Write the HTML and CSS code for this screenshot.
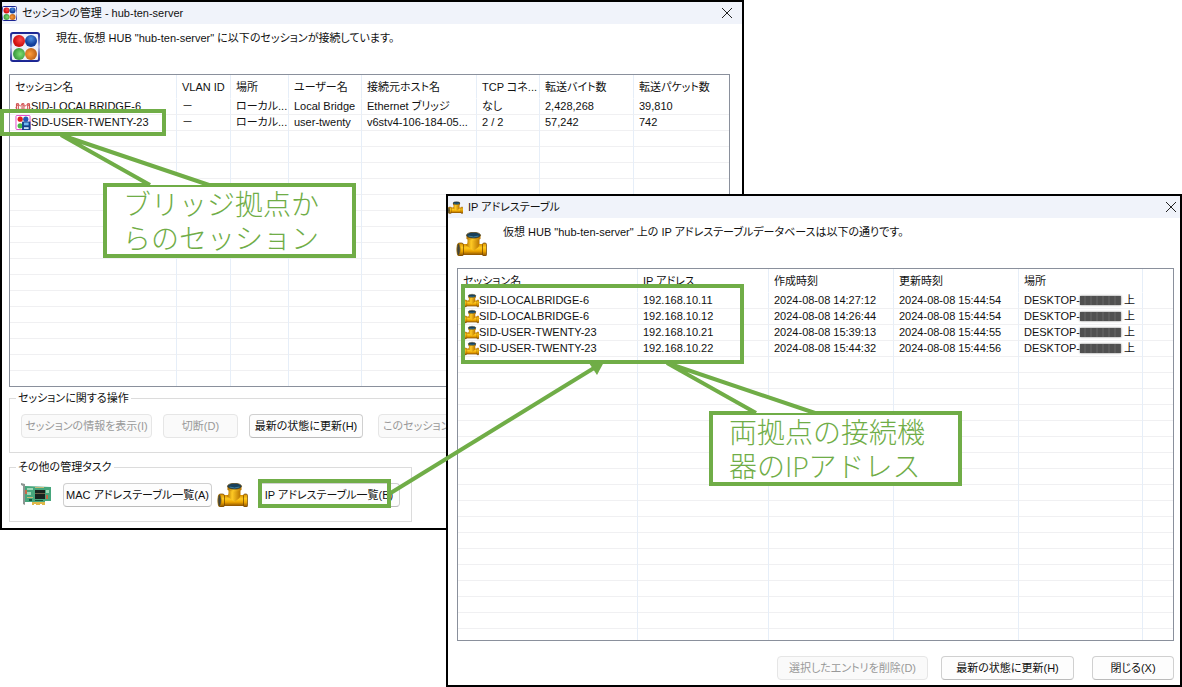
FILE: index.html
```html
<!DOCTYPE html>
<html lang="ja">
  <head>
    <meta charset="UTF-8" />
    <meta name="viewport" content="width=device-width, initial-scale=1.0" />
    <title>セッションの管理 - hub-ten-server</title>
    <link rel="stylesheet" href="styles.css">
  </head>
  <body>
    <!-- Shared icons -->
    <svg class="sprite" aria-hidden="true">
      <defs>
        <linearGradient id="brass" x1="0" y1="0" x2="0" y2="1">
          <stop offset="0" stop-color="#d99000" />
          <stop offset="0.35" stop-color="#ffcb20" />
          <stop offset="0.65" stop-color="#eda400" />
          <stop offset="1" stop-color="#8a5000" />
        </linearGradient>
        <linearGradient id="brass-side" x1="0" y1="0" x2="1" y2="0">
          <stop offset="0" stop-color="#a86800" />
          <stop offset="0.4" stop-color="#ffca24" />
          <stop offset="1" stop-color="#b87400" />
        </linearGradient>
        <linearGradient id="hub-frame" x1="0" y1="0" x2="0" y2="1">
          <stop offset="0" stop-color="#1a2492" />
          <stop offset="0.5" stop-color="#b9c0e6" />
          <stop offset="1" stop-color="#1a2492" />
        </linearGradient>
        <radialGradient id="ball-red" cx="0.6" cy="0.4"><stop offset="0" stop-color="#ff4a4a" /><stop offset="1" stop-color="#d01010" /></radialGradient>
        <radialGradient id="ball-blue" cx="0.5" cy="0.3"><stop offset="0" stop-color="#4f8fe0" /><stop offset="1" stop-color="#123f9c" /></radialGradient>
        <radialGradient id="ball-green" cx="0.6" cy="0.5"><stop offset="0" stop-color="#7fdd70" /><stop offset="1" stop-color="#3f9f43" /></radialGradient>
        <radialGradient id="ball-orange" cx="0.4" cy="0.5"><stop offset="0" stop-color="#ff9d3c" /><stop offset="1" stop-color="#c66a1c" /></radialGradient>
      </defs>
      <symbol id="icon-hub" viewBox="0 0 30 30">
        <rect x="1" y="1" width="28" height="28" rx="2" fill="#eef0fa" stroke="url(#hub-frame)" stroke-width="2" />
        <circle cx="9" cy="9" r="6" fill="url(#ball-red)" />
        <circle cx="21" cy="9" r="6" fill="url(#ball-blue)" />
        <circle cx="9" cy="22" r="6" fill="url(#ball-green)" />
        <circle cx="21" cy="22" r="6" fill="url(#ball-orange)" />
      </symbol>
      <symbol id="icon-pipe" viewBox="0 0 30 24">
        <rect x="3" y="12" width="24" height="11" fill="url(#brass)" />
        <path d="M11 5h12v7l-1 3-5 4-5-4-3-2c2-1 2-2 2-4z" fill="url(#brass-side)" />
        <path d="M10 3h14v4q-7 3-14 0z" fill="url(#brass-side)" />
        <ellipse cx="17" cy="3.200" rx="7" ry="2.900" fill="#17405c" stroke="#5c4718" stroke-width="0.8" />
        <path d="M12 4q5 2 10 0" fill="none" stroke="#3f7f9c" />
        <rect x="26" y="11" width="4" height="13" rx="1.500" fill="url(#brass)" stroke="#6e4400" stroke-width="0.7" />
        <rect x="1" y="11" width="6" height="13" rx="2" fill="url(#brass)" stroke="#6e4400" stroke-width="0.7" />
        <ellipse cx="2" cy="17.500" rx="1.700" ry="6" fill="#3f4440" stroke="#b87c00" stroke-width="0.7" />
      </symbol>
      <symbol id="icon-nic" viewBox="0 0 30 26">
        <path d="M0 1l4 1v21l-2-1V4L0 3z" fill="#8c9692" />
        <path d="M4 4l26 1v14h-6v3H11v-2H4z" fill="#46a67c" />
        <path d="M11 20h13v3h-3v-1h-2v1h-4v-1h-2v1h-2z" fill="#e0b84a" />
        <rect x="14" y="8" width="10" height="9" fill="#17241f" />
        <path d="M14 11h10v1H14z" fill="#6e6248" />
        <path d="M6 6h6v2H6zM6 10h4v3H6zM25 8h3v3h-3z" fill="#9fd8b8" />
        <path d="M4 8h2v4H4zM25 13h2v4h-2z" fill="#c46a48" />
        <path d="M6 15h6v1H6zM14 5h9v1h-9z" fill="#c7b878" />
        <path d="M8 17h3v2H8zM14 18h8v1h-8z" fill="#165a40" />
      </symbol>
      <symbol id="icon-bridge" viewBox="0 0 16 16">
        <path d="M1 14V5h2v9M7 14V5h2v9M13 14V5h2v9" fill="none" stroke="#c83c3c" />
        <path d="M0 9q2-1 3-4 2 5 4 0 3 5 6 0 1 3 3 4M0 11h16" fill="none" stroke="#d85858" />
      </symbol>
      <symbol id="icon-session" viewBox="0 0 16 16">
        <rect x="0.5" y="0.5" width="15" height="15" rx="1" fill="#ffffff" stroke="#e040c8" />
        <circle cx="5" cy="4.500" r="2.800" fill="#e02020" />
        <circle cx="11" cy="4.500" r="2.800" fill="#2458b8" />
        <circle cx="5" cy="11.500" r="2.800" fill="#48b848" />
        <rect x="7" y="7" width="9" height="9" fill="#12408c" />
        <rect x="9" y="8" width="5" height="3" fill="#70b8f0" />
        <rect x="9" y="13" width="5" height="2" fill="#c8e0f8" />
      </symbol>
    </svg>

    <main class="desktop">
      <!-- Session list -->
      <section class="window session-window">
        <header class="titlebar">
          <svg class="icon-small"><use href="#icon-hub" /></svg>
          <h1>セッションの管理 - hub-ten-server</h1>
          <button class="close" aria-label="閉じる"><svg viewBox="0 0 10 10"><path d="M0 0l10 10M10 0L0 10" /></svg></button>
        </header>
        <div class="intro">
          <svg class="icon-hub"><use href="#icon-hub" /></svg>
          <p>現在、仮想 HUB "hub-ten-server" に以下のセッションが接続しています。</p>
        </div>
        <div class="list">
          <table>
            <colgroup>
              <col class="w-session"><col class="w-vlan"><col class="w-place"><col class="w-user">
              <col class="w-host"><col class="w-tcp"><col class="w-bytes"><col>
            </colgroup>
            <thead>
              <tr><th>セッション名</th><th>VLAN ID</th><th>場所</th><th>ユーザー名</th><th>接続元ホスト名</th><th>TCP コネ...</th><th>転送バイト数</th><th>転送パケット数</th></tr>
            </thead>
            <tbody>
              <tr><td class="name"><svg><use href="#icon-bridge" /></svg>SID-LOCALBRIDGE-6</td><td>－</td><td>ローカル...</td><td>Local Bridge</td><td>Ethernet ブリッジ</td><td>なし</td><td>2,428,268</td><td>39,810</td></tr>
              <tr><td class="name"><svg><use href="#icon-session" /></svg>SID-USER-TWENTY-23</td><td>－</td><td>ローカル...</td><td>user-twenty</td><td>v6stv4-106-184-05...</td><td>2 / 2</td><td>57,242</td><td>742</td></tr>
              <tr class="filler"><td></td><td></td><td></td><td></td><td></td><td></td><td></td><td></td></tr>
            </tbody>
          </table>
        </div>
        <fieldset class="session-actions">
          <legend>セッションに関する操作</legend>
          <div class="button-row">
            <button class="btn btn-info" disabled>セッションの情報を表示(I)</button>
            <button class="btn btn-cut" disabled>切断(D)</button>
            <button class="btn btn-reload">最新の状態に更新(H)</button>
            <button class="btn btn-more" disabled>このセッションの</button>
          </div>
        </fieldset>
        <fieldset class="other-tasks">
          <legend>その他の管理タスク</legend>
          <div class="task-row">
            <svg class="icon-nic"><use href="#icon-nic" /></svg>
            <button class="btn btn-mac">MAC アドレステーブル一覧(A)</button>
            <svg class="icon-pipe"><use href="#icon-pipe" /></svg>
            <button class="btn btn-ip">IP アドレステーブル一覧(B)</button>
          </div>
        </fieldset>
      </section>

      <!-- IP address table -->
      <section class="window ip-window">
        <header class="titlebar">
          <svg class="icon-small"><use href="#icon-pipe" /></svg>
          <h2>IP アドレステーブル</h2>
          <button class="close" aria-label="閉じる"><svg viewBox="0 0 10 10"><path d="M0 0l10 10M10 0L0 10" /></svg></button>
        </header>
        <div class="intro">
          <svg class="icon-pipe"><use href="#icon-pipe" /></svg>
          <p>仮想 HUB "hub-ten-server" 上の IP アドレステーブルデータベースは以下の通りです。</p>
        </div>
        <div class="list">
          <table>
            <colgroup>
              <col class="w-ip-session"><col class="w-ip"><col class="w-time"><col class="w-time"><col class="w-desktop"><col>
            </colgroup>
            <thead>
              <tr><th>セッション名</th><th>IP アドレス</th><th>作成時刻</th><th>更新時刻</th><th>場所</th><th></th></tr>
            </thead>
            <tbody>
              <tr><td class="name"><svg><use href="#icon-pipe" /></svg>SID-LOCALBRIDGE-6</td><td>192.168.10.11</td><td>2024-08-08 14:27:12</td><td>2024-08-08 15:44:54</td><td>DESKTOP-<span class="redacted"></span> 上</td><td></td></tr>
              <tr><td class="name"><svg><use href="#icon-pipe" /></svg>SID-LOCALBRIDGE-6</td><td>192.168.10.12</td><td>2024-08-08 14:26:44</td><td>2024-08-08 15:44:54</td><td>DESKTOP-<span class="redacted"></span> 上</td><td></td></tr>
              <tr><td class="name"><svg><use href="#icon-pipe" /></svg>SID-USER-TWENTY-23</td><td>192.168.10.21</td><td>2024-08-08 15:39:13</td><td>2024-08-08 15:44:55</td><td>DESKTOP-<span class="redacted"></span> 上</td><td></td></tr>
              <tr><td class="name"><svg><use href="#icon-pipe" /></svg>SID-USER-TWENTY-23</td><td>192.168.10.22</td><td>2024-08-08 15:44:32</td><td>2024-08-08 15:44:56</td><td>DESKTOP-<span class="redacted"></span> 上</td><td></td></tr>
              <tr class="filler"><td></td><td></td><td></td><td></td><td></td><td></td></tr>
            </tbody>
          </table>
        </div>
        <footer class="ip-footer">
          <button class="btn btn-delete" disabled>選択したエントリを削除(D)</button>
          <button class="btn btn-refresh">最新の状態に更新(H)</button>
          <button class="btn btn-close">閉じる(X)</button>
        </footer>
      </section>

      <!-- Annotations -->
      <div class="mark mark-session"></div>
      <div class="mark mark-table"></div>
      <div class="mark mark-button"></div>
      <p class="callout callout-bridge">ブリッジ拠点か<br>らのセッション</p>
      <p class="callout callout-devices">両拠点の接続機<br>器のIPアドレス</p>
      <svg class="pointers" aria-hidden="true">
        <path class="tail" d="M150 185L61 135L209 185" />
        <path class="tail" d="M756 413L667 363L815 413" />
        <path class="arrow" d="M389 494L594 368" />
        <path class="arrow-head" d="M604 362l-7 13-8-12z" />
      </svg>
    </main>
  </body>
</html>
```

FILE: styles.css
```css
* {
  box-sizing: border-box;
}

body {
  margin: 0;
  background: #fff;
  color: #111;
  font-family: "Liberation Sans", "Noto Sans CJK JP", sans-serif;
  font-feature-settings: "palt";
  font-size: 11px;
  line-height: 16px;
}

h1,
h2,
p {
  margin: 0;
}

svg {
  flex: none;
}

.sprite {
  position: absolute;
  width: 0;
  height: 0;
}

.desktop {
  position: relative;
  min-height: 100vh;
  overflow: hidden;
}

/* Windows */
.window {
  position: absolute;
  background: #fff;
  border: 2px solid #000;
  overflow: hidden;
}

.session-window {
  top: 0;
  left: 0;
  right: 438px;
  padding-bottom: 6px;
}

.ip-window {
  top: 194px;
  left: 446px;
  right: 0;
  padding-bottom: 5px;
}

.titlebar {
  display: flex;
  align-items: center;
  height: 22px;
  gap: 5px;
  background: #f0f3fa;
}

.titlebar h1,
.titlebar h2 {
  flex: 1;
  font-size: 11px;
  font-weight: normal;
}

.icon-small {
  width: 15px;
  height: 15px;
}

.close {
  width: 30px;
  height: 22px;
  padding: 0;
  border: 0;
  background: none;
}

.ip-window .close {
  width: 18px;
}

.close svg {
  width: 10px;
  height: 10px;
  stroke: #222;
  fill: none;
}

.intro {
  display: flex;
  height: 50px;
  gap: 16px;
  padding: 6px 8px;
}

.icon-hub {
  width: 30px;
  height: 30px;
  margin-top: 2px;
}

.icon-pipe {
  width: 31px;
  height: 24px;
}

.ip-window .intro .icon-pipe {
  margin-top: 8px;
}

/* Lists */
.list {
  border: 1px solid #8a909c;
}

.session-window .list {
  margin: 0 12px 0 7px;
}

.ip-window .list {
  margin: 0 6px 0 9px;
}

table {
  width: 100%;
  table-layout: fixed;
  border-collapse: separate;
  border-spacing: 0;
}

th,
td {
  height: 16px;
  padding: 0 5px;
  border-top: 1px solid #f0f0f2;
  border-right: 1px solid #e6eef8;
  line-height: 15px;
  text-align: left;
  font-weight: normal;
  white-space: nowrap;
  overflow: hidden;
}

th {
  height: 23px;
  padding-top: 2px;
  border-top: 0;
}

tbody tr:first-child td {
  border-top-color: #fff;
}

th:last-child,
td:last-child {
  border-right: 0;
}

.name svg {
  width: 16px;
  height: 15px;
  vertical-align: top;
}

.filler td {
  height: 256px;
  border-top: 0;
  background: repeating-linear-gradient(#f0f0f2 0 1px, #fff 1px 16px);
}

.ip-window .filler td {
  height: 284px;
}

.w-session { width: 167px; }
.w-vlan { width: 54px; }
.w-place { width: 58px; }
.w-user { width: 73px; }
.w-host { width: 115px; }
.w-tcp { width: 63px; }
.w-bytes { width: 94px; }
.w-ip-session { width: 180px; }
.w-ip { width: 131px; }
.w-time { width: 125px; }
.w-desktop { width: 124px; }

.redacted {
  display: inline-block;
  width: 41px;
  height: 9px;
  margin-bottom: 2px;
  vertical-align: middle;
  background: repeating-linear-gradient(90deg, #505050 0 4px, #5c5c5c 4px 6px);
  box-shadow: 0 0 2px #777;
}

/* Groups and buttons */
fieldset {
  height: 61px;
  margin: 5px 12px 0 7px;
  padding: 0 11px;
  border: 1px solid #dcdcdc;
}

legend {
  margin-left: -5px;
  padding: 0 2px;
  line-height: 13px;
}

.other-tasks {
  width: 403px;
  margin-top: 8px;
}

.button-row {
  display: flex;
  gap: 11px;
  margin-top: 9px;
}

.task-row {
  display: flex;
  align-items: center;
  gap: 5px;
  margin-top: 8px;
}

.btn {
  flex: none;
  height: 24px;
  padding: 0;
  border: 1px solid #d0d0d0;
  border-bottom-color: #bbb;
  border-radius: 4px;
  background: #fdfdfd;
  color: #111;
  font: inherit;
  font-feature-settings: "palt";
  white-space: nowrap;
}

.btn:disabled {
  border-color: #e6e6e6;
  background: #fafafa;
  color: #999;
}

.btn-info { width: 131px; }
.btn-cut { width: 75px; }
.btn-reload { width: 114px; }
.btn-more {
  width: 150px;
  margin-left: 4px;
  padding-left: 4px;
  text-align: left;
}
.btn-mac {
  width: 149px;
  margin-left: 7px;
}
.btn-ip {
  width: 142px;
  margin-left: 5px;
}
.btn-delete { width: 151px; }
.btn-refresh { width: 133px; }
.btn-close {
  width: 82px;
  margin-left: 5px;
}

.icon-nic {
  width: 30px;
  height: 26px;
}

.ip-footer {
  display: flex;
  justify-content: flex-end;
  gap: 13px;
  padding: 15px 6px 0;
}

/* Annotations */
.mark {
  position: absolute;
  border: 4px solid #70ad47;
}

.mark-session {
  top: 109px;
  left: 0;
  width: 166px;
  height: 27px;
}

.mark-table {
  top: 284px;
  left: 461px;
  width: 283px;
  height: 80px;
}

.mark-button {
  top: 479px;
  left: 258px;
  width: 133px;
  height: 29px;
}

.callout {
  position: absolute;
  width: 253px;
  height: 75px;
  padding-left: 16px;
  border: 4px solid #70ad47;
  background: #fff;
  color: #70ad47;
  font-family: Lato, "Noto Sans CJK JP", sans-serif;
  font-feature-settings: normal;
  font-size: 28px;
  font-weight: 300;
  line-height: 34px;
}

.callout-bridge {
  top: 183px;
  left: 103px;
}

.callout-devices {
  top: 411px;
  left: 709px;
}

.pointers {
  position: absolute;
  inset: 0;
  width: 100%;
  height: 100%;
}

.tail {
  fill: #fff;
  stroke: #70ad47;
  stroke-width: 4;
  stroke-linejoin: bevel;
}

.arrow {
  stroke: #70ad47;
  stroke-width: 4;
}

.arrow-head {
  fill: #70ad47;
}
```
